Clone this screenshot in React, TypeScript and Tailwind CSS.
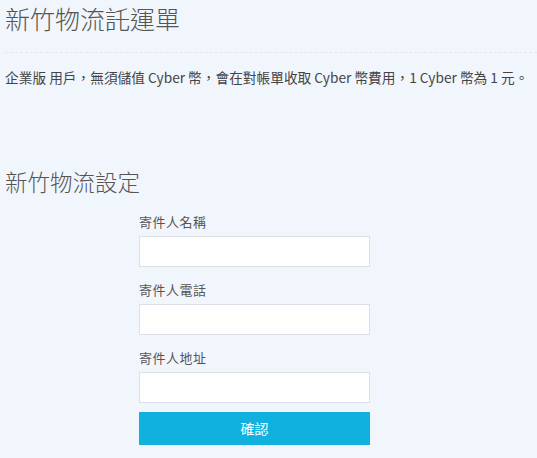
export default function App() {
  const fields = ["寄件人名稱", "寄件人電話", "寄件人地址"];

  return (
    <div
      className="min-h-screen bg-[#f1f5fc] pl-[5px] text-[#333]"
      style={{ fontFamily: '"Noto Sans CJK TC", "Open Sans", sans-serif' }}
    >
      <h1 className="text-[25px] leading-[36px] font-light text-[#555]">新竹物流託運單</h1>
      <div className="mt-4 border-t border-dashed border-[#e3e7ee]" />
      <p className="mt-[14px] whitespace-nowrap text-[13.7px] leading-5 text-[#444]">
        企業版 用戶，無須儲值 Cyber 幣，會在對帳單收取 Cyber 幣費用，1 Cyber 幣為 1 元。
      </p>

      <h2 className="mt-[76px] text-[22.5px] leading-[36px] font-light text-[#555]">新竹物流設定</h2>

      <form className="ml-[134px] w-[231px]">
        {fields.map((label) => (
          <div key={label} className="mt-[13px]">
            <label className="block text-[13px] leading-5 tracking-[0.5px] text-[#555]">{label}</label>
            <input className="mt-[4px] block h-[31px] w-full border border-[#dcdfe5] bg-white px-2 text-sm outline-none" />
          </div>
        ))}
        <button
          type="button"
          className="mt-[9px] h-[33px] w-full bg-[#10b1de] text-[14px] text-white"
        >
          確認
        </button>
      </form>
    </div>
  );
}
